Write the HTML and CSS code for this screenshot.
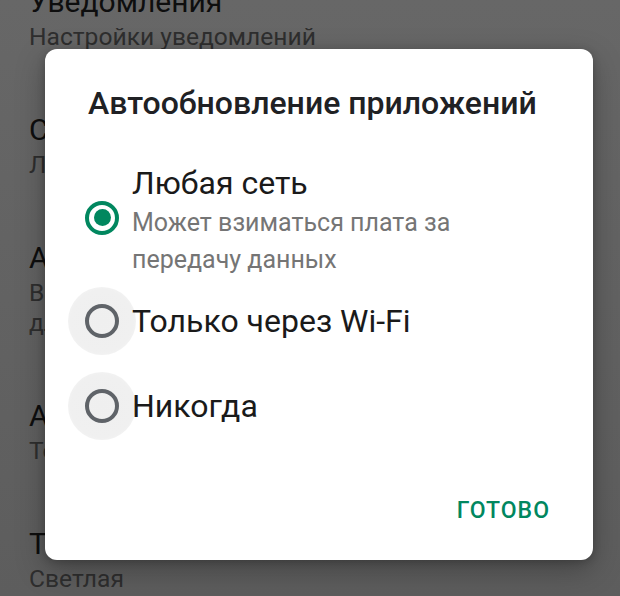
FILE: index.html
```html
<!DOCTYPE html>
<html lang="ru">
<head>
<meta charset="utf-8">
<title>Автообновление приложений</title>
<link rel="stylesheet" href="styles.css">
</head>
<body>
<div class="settings">
  <div class="item">
    <div class="item-title">Уведомления</div>
    <div class="item-sub">Настройки уведомлений</div>
  </div>
  <div class="item">
    <div class="item-title">Скачивание приложений</div>
    <div class="item-sub">Любая сеть</div>
  </div>
  <div class="item">
    <div class="item-title">Автообновление приложений</div>
    <div class="item-sub">Включено автообновление приложений<br>для любой сети</div>
  </div>
  <div class="item">
    <div class="item-title">Автовоспроизведение видео</div>
    <div class="item-sub">Только через Wi-Fi</div>
  </div>
  <div class="item">
    <div class="item-title">Тема</div>
    <div class="item-sub">Светлая</div>
  </div>
</div>

<div class="dialog">
  <div class="dialog-title">Автообновление приложений</div>
  <div class="options">
    <div class="option">
      <span class="radio checked"></span>
      <div class="option-text">
        <div class="option-label">Любая сеть</div>
        <div class="option-desc">Может взиматься плата за<br>передачу данных</div>
      </div>
    </div>
    <div class="option tall">
      <span class="radio halo"></span>
      <div class="option-text">
        <div class="option-label">Только через Wi-Fi</div>
      </div>
    </div>
    <div class="option tall">
      <span class="radio halo"></span>
      <div class="option-text">
        <div class="option-label">Никогда</div>
      </div>
    </div>
  </div>
  <div class="actions">
    <span class="btn">ГОТОВО</span>
  </div>
</div>
</body>
</html>
```

FILE: styles.css
```css
html, body {
  margin: 0;
  padding: 0;
}
body {
  width: 620px;
  height: 596px;
  overflow: hidden;
  background: linear-gradient(#676767, #5d5d5d);
  font-family: Roboto, "Noto Sans", sans-serif;
  position: relative;
}

.settings {
  display: flex;
  flex-direction: column;
  gap: 58px;
  padding-left: 29px;
  margin-top: -18px;
}
.item-title {
  font-size: 30px;
  line-height: 40px;
  color: #0e0e0e;
  white-space: nowrap;
}
.item-sub {
  font-size: 24.6px;
  line-height: 30px;
  color: #2e2e2e;
  white-space: nowrap;
}

.dialog {
  position: absolute;
  z-index: 1;
  left: 45px;
  top: 49px;
  width: 548px;
  height: 511px;
  background: #fff;
  border-radius: 12px;
  box-shadow: 0 10px 30px rgba(0,0,0,0.28), 0 2px 8px rgba(0,0,0,0.2);
  display: flex;
  flex-direction: column;
  box-sizing: border-box;
  padding-top: 36px;
}
.dialog-title {
  padding-left: 43px;
  font-size: 32px;
  line-height: 36px;
  font-weight: 500;
  color: #202124;
  white-space: nowrap;
}
.options {
  margin-top: 42px;
  padding-left: 38px;
  display: flex;
  flex-direction: column;
}
.option {
  display: flex;
  align-items: center;
  gap: 13px;
}
.option.tall {
  min-height: 85px;
}
.radio {
  position: relative;
  flex: none;
  width: 34px;
  height: 34px;
  box-sizing: border-box;
  border-radius: 50%;
  border: 4px solid #5f6368;
  margin-left: 2px;
  margin-top: -6px;
}
.option.tall .radio {
  margin-top: 0;
}
.radio.checked {
  border-color: #01875f;
}
.radio.checked::after {
  content: "";
  position: absolute;
  left: 50%;
  top: 50%;
  width: 17px;
  height: 17px;
  margin: -8.5px 0 0 -8.5px;
  border-radius: 50%;
  background: #01875f;
}
.radio.halo::before {
  content: "";
  position: absolute;
  left: 50%;
  top: 50%;
  width: 68px;
  height: 68px;
  margin: -34px 0 0 -34px;
  border-radius: 50%;
  background: radial-gradient(circle, #efefef 0, #f0f0f0 65%, rgba(243,243,243,0.7) 85%, rgba(255,255,255,0) 100%);
  z-index: -1;
}
.option-text {
  position: relative;
}
.option-label {
  font-size: 32px;
  line-height: 40px;
  color: #1a1a1a;
  white-space: nowrap;
}
.option-desc {
  margin-top: 1px;
  font-size: 25px;
  line-height: 37px;
  color: #757575;
  white-space: nowrap;
}
.actions {
  margin-top: auto;
  padding: 0 43px 34px 0;
  display: flex;
  justify-content: flex-end;
}
.btn {
  font-size: 23px;
  line-height: 30px;
  font-weight: 500;
  letter-spacing: 1px;
  color: #01875f;
}
```
